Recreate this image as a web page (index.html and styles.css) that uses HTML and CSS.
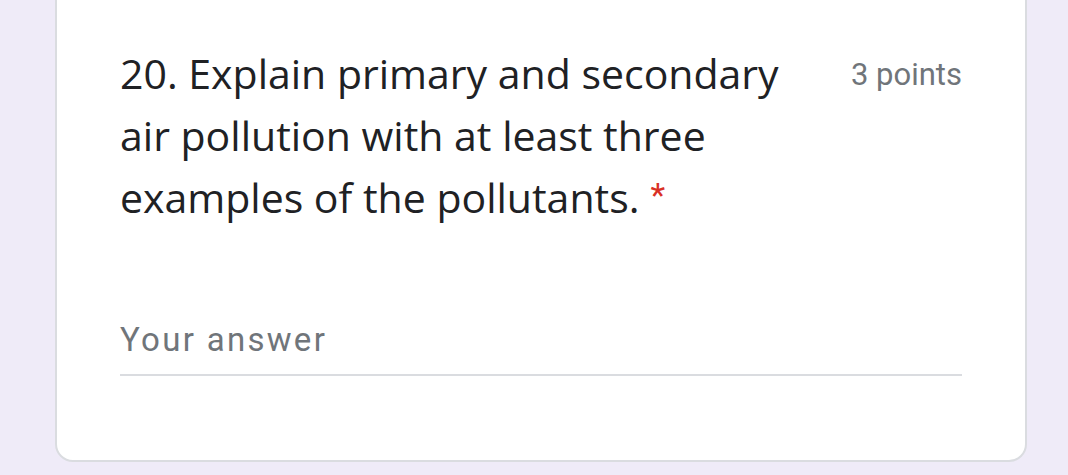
FILE: index.html
```html
<!DOCTYPE html>
<html lang="en">
<head>
<meta charset="utf-8">
<title>Question 20</title>
<link rel="stylesheet" href="styles.css">
</head>
<body>
<main class="page">
  <section class="card">
    <div class="header">
      <h2 class="title">20. Explain primary and secondary air pollution with at least three examples of the pollutants.<span class="req">*</span></h2>
      <span class="points">3 points</span>
    </div>
    <div class="answer">
      <span class="placeholder">Your answer</span>
    </div>
  </section>
</main>
</body>
</html>
```
FILE: styles.css
```css
html, body {
  margin: 0;
  padding: 0;
}
body {
  background: #efebf8;
  width: 1068px;
  height: 475px;
  overflow: hidden;
}
.page {
  padding: 0 41px 0 55px;
}
.card {
  margin-top: -40px;
  background: #fff;
  border: 2px solid #dadce0;
  border-radius: 0 0 18px 18px;
  padding: 80px 63px 0 63px;
  height: 418px;
  box-sizing: content-box;
}
.header {
  display: flex;
  align-items: flex-start;
  justify-content: space-between;
}
.title {
  margin: 0;
  width: 700px;
  font-family: "Open Sans", sans-serif;
  font-weight: 400;
  font-size: 41px;
  line-height: 62px;
  color: #202124;
}
.req {
  display: inline-block;
  margin-left: 11px;
  font-family: Roboto, sans-serif;
  font-size: 34px;
  line-height: 34px;
  vertical-align: 6px;
  color: #d93025;
}
.points {
  padding-top: 2px;
  font-family: Roboto, sans-serif;
  font-size: 31px;
  line-height: 62px;
  color: #70757a;
}
.answer {
  margin-top: 92px;
  border-bottom: 2px solid #dadce0;
  padding-bottom: 15px;
}
.placeholder {
  font-family: Roboto, sans-serif;
  font-size: 33px;
  letter-spacing: 2.3px;
  color: #70757a;
}
```
